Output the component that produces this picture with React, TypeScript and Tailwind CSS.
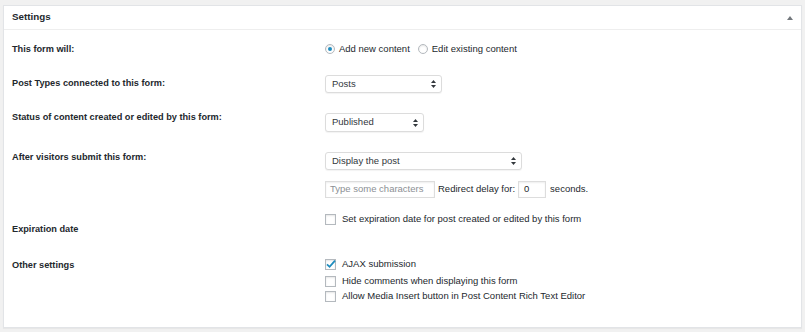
import React from 'react';

const font = { fontFamily: '"Liberation Sans", Arial, sans-serif' };

function SelectArrows() {
  return (
    <svg width="5" height="8" viewBox="0 0 5 8" className="shrink-0">
      <path d="M2.5 0 L5 3 L0 3 Z" fill="#32373c" />
      <path d="M2.5 8 L5 5 L0 5 Z" fill="#32373c" />
    </svg>
  );
}

function Select({ value, width, height = 18 }: { value: string; width: number; height?: number }) {
  return (
    <div
      className="flex items-center justify-between bg-white border border-[#dcdcdc] rounded-[3px] pl-[6px] pr-[5px] shadow-[0_1px_1px_rgba(0,0,0,0.05)] text-[9.5px] text-[#32373c]"
      style={{ width, height }}
    >
      <span>{value}</span>
      <SelectArrows />
    </div>
  );
}

function Radio({ checked, label }: { checked?: boolean; label: string }) {
  return (
    <div className="flex items-center gap-[4px]">
      <span className="w-[10px] h-[10px] rounded-full border border-[#b4b9be] bg-white shadow-[inset_0_1px_2px_rgba(0,0,0,0.1)] flex items-center justify-center">
        {checked && <span className="w-[4px] h-[4px] rounded-full bg-[#1e8cbe]" />}
      </span>
      <span>{label}</span>
    </div>
  );
}

function Checkbox({ checked, label }: { checked?: boolean; label: string }) {
  return (
    <div className="flex items-center gap-[6px] h-[12px]">
      <span className="relative w-[11px] h-[11px] border border-[#b4b9be] bg-white shadow-[inset_0_1px_2px_rgba(0,0,0,0.1)] shrink-0">
        {checked && (
          <svg className="absolute -left-[1px] -top-[2px]" width="12" height="12" viewBox="0 0 12 12">
            <path d="M2 6.3 L4.6 8.8 L10 2.6" fill="none" stroke="#1e8cbe" strokeWidth="1.8" />
          </svg>
        )}
      </span>
      <span>{label}</span>
    </div>
  );
}

function Row({ label, labelTop, children, height }: { label: string; labelTop: number; children: React.ReactNode; height: number }) {
  return (
    <div className="flex items-start" style={{ height }}>
      <div className="w-[321px] pl-[8px] font-bold text-[9.2px] leading-[12px] text-[#23282d] shrink-0" style={{ marginTop: labelTop }}>
        {label}
      </div>
      <div className="flex flex-col">{children}</div>
    </div>
  );
}

export default function App() {
  return (
    <div className="w-[805px] h-[332px] bg-[#f1f1f1] pt-[5px] px-[3px] pb-[4px]" style={font}>
      <div className="bg-white border border-[#e2e4e7] shadow-[0_1px_1px_rgba(0,0,0,0.04)] h-[323px] flex flex-col text-[9.5px] text-[#23282d]">
        <div className="h-[24px] border-b border-[#eeeeee] flex items-center justify-between pl-[8px] pr-[8px] shrink-0">
          <span className="font-bold text-[9.8px]">Settings</span>
          <svg width="6" height="4" viewBox="0 0 6 4">
            <path d="M3 0 L6 4 L0 4 Z" fill="#72777c" />
          </svg>
        </div>

        <Row label="This form will:" labelTop={13} height={36}>
          <div className="flex items-center gap-[8px] h-[12px] mt-[13px]">
            <Radio checked label="Add new content" />
            <Radio label="Edit existing content" />
          </div>
        </Row>

        <Row label="Post Types connected to this form:" labelTop={11} height={34}>
          <div className="mt-[9px]">
            <Select value="Posts" width={117} />
          </div>
        </Row>

        <Row label="Status of content created or edited by this form:" labelTop={11} height={40}>
          <div className="mt-[13px]">
            <Select value="Published" width={99} height={19} />
          </div>
        </Row>

        <Row label="After visitors submit this form:" labelTop={11} height={65}>
          <div className="mt-[12px]">
            <Select value="Display the post" width={197} />
          </div>
          <div className="flex items-center mt-[11px] h-[17px]">
            <div className="w-[110px] h-[17px] border border-[#dddddd] flex items-center pl-[4px] text-[#8c8f94] shadow-[inset_0_1px_2px_rgba(0,0,0,0.07)]">
              Type some characters
            </div>
            <span className="ml-[3px]">Redirect delay for:</span>
            <div className="ml-[3px] w-[28px] h-[17px] border border-[#dddddd] flex items-center pl-[5px] shadow-[inset_0_1px_2px_rgba(0,0,0,0.07)]">
              0
            </div>
            <span className="ml-[4px]">seconds.</span>
          </div>
        </Row>

        <Row label="Expiration date" labelTop={18} height={40}>
          <div className="mt-[8px]">
            <Checkbox label="Set expiration date for post created or edited by this form" />
          </div>
        </Row>

        <Row label="Other settings" labelTop={14} height={80}>
          <div className="mt-[13px]">
            <Checkbox checked label="AJAX submission" />
          </div>
          <div className="mt-[5px]">
            <Checkbox label="Hide comments when displaying this form" />
          </div>
          <div className="mt-[3px]">
            <Checkbox label="Allow Media Insert button in Post Content Rich Text Editor" />
          </div>
        </Row>
      </div>
    </div>
  );
}
